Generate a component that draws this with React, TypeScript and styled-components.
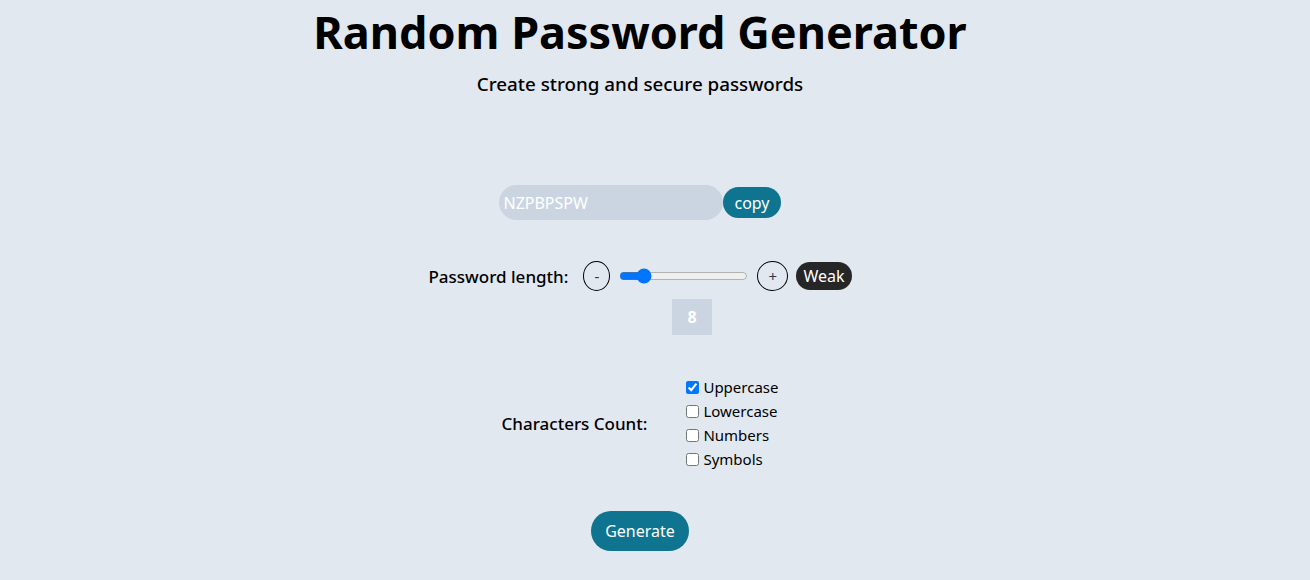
import React, { useState } from "react";
import styled, { createGlobalStyle } from "styled-components";

const Global = createGlobalStyle`
  html, body { margin: 0; padding: 0; background: #e2e8f0; }
  body { font-family: "Noto Sans", "Open Sans", sans-serif; color: #000; }
`;

const Page = styled.div`
  width: 1280px;
  display: flex;
  flex-direction: column;
  align-items: center;
`;

const Title = styled.h1`
  margin: 0;
  font-size: 45px;
  line-height: 63px;
  font-weight: 700;
`;

const Subtitle = styled.p`
  margin: 9px 0 0;
  font-size: 18.8px;
  line-height: 24px;
  font-weight: 500;
`;

const PasswordRow = styled.div`
  margin-top: 89px;
  display: flex;
  align-items: center;
`;

const PasswordField = styled.input`
  width: 224px;
  height: 35px;
  box-sizing: border-box;
  border: none;
  outline: none;
  border-radius: 18px;
  background: #cbd5e1;
  color: #fff;
  font-family: inherit;
  font-size: 16px;
  padding: 0 4px;
`;

const Pill = styled.button<{ $pad?: string; $h?: number }>`
  border: none;
  border-radius: 999px;
  background: #0e7490;
  color: #fff;
  font-family: inherit;
  font-size: 16px;
  height: ${(p) => p.$h ?? 31}px;
  padding: ${(p) => p.$pad ?? "0 11px"};
  cursor: pointer;
`;

const LengthRow = styled.div`
  margin-top: 41px;
  display: flex;
  align-items: center;
`;

const Label = styled.label<{ $mr: number }>`
  font-size: 17px;
  font-weight: 500;
  margin-right: ${(p) => p.$mr}px;
`;

const Round = styled.button<{ $w: number }>`
  width: ${(p) => p.$w}px;
  height: 30px;
  border-radius: 50%;
  border: 1px solid #000;
  background: transparent;
  color: #334;
  font-size: 15px;
  padding: 0;
  font-family: inherit;
`;

const Slider = styled.input`
  width: 129px;
  margin: 0 9px;
`;

const Badge = styled.span`
  margin-left: 8px;
  background: #262626;
  color: #fff;
  border-radius: 999px;
  height: 28px;
  padding: 0 7px;
  display: inline-flex;
  align-items: center;
  font-size: 16px;
`;

const CountBox = styled.div`
  margin-top: 8px;
  margin-left: 104px;
  width: 40px;
  height: 36px;
  background: #cbd5e1;
  color: #fff;
  font-weight: 700;
  font-size: 16px;
  display: flex;
  align-items: center;
  justify-content: center;
`;

const CharRow = styled.div`
  margin-top: 40px;
  display: flex;
  align-items: center;
`;

const Options = styled.div`
  display: flex;
  flex-direction: column;
`;

const Option = styled.label`
  display: flex;
  align-items: center;
  height: 24px;
  font-size: 15px;
  input { margin: 0 4px 0 0; width: 13px; height: 13px; }
`;

const GenerateButton = styled(Pill)`
  margin-top: 40px;
`;

export default function App() {
  const [len, setLen] = useState(8);
  const opts = ["Uppercase", "Lowercase", "Numbers", "Symbols"];
  return (
    <>
      <Global />
      <Page>
        <Title>Random Password Generator</Title>
        <Subtitle>Create strong and secure passwords</Subtitle>
        <PasswordRow>
          <PasswordField readOnly value="NZPBPSPW" />
          <Pill>copy</Pill>
        </PasswordRow>
        <LengthRow>
          <Label $mr={15}>Password length:</Label>
          <Round $w={27}>-</Round>
          <Slider
            type="range"
            min={4}
            max={32}
            value={len}
            onChange={(e) => setLen(Number(e.target.value))}
          />
          <Round $w={31}>+</Round>
          <Badge>Weak</Badge>
        </LengthRow>
        <CountBox>{len}</CountBox>
        <CharRow>
          <Label $mr={39}>Characters Count:</Label>
          <Options>
            {opts.map((o, i) => (
              <Option key={o}>
                <input type="checkbox" defaultChecked={i === 0} />
                {o}
              </Option>
            ))}
          </Options>
        </CharRow>
        <GenerateButton $pad="0 14px" $h={40}>Generate</GenerateButton>
      </Page>
    </>
  );
}
